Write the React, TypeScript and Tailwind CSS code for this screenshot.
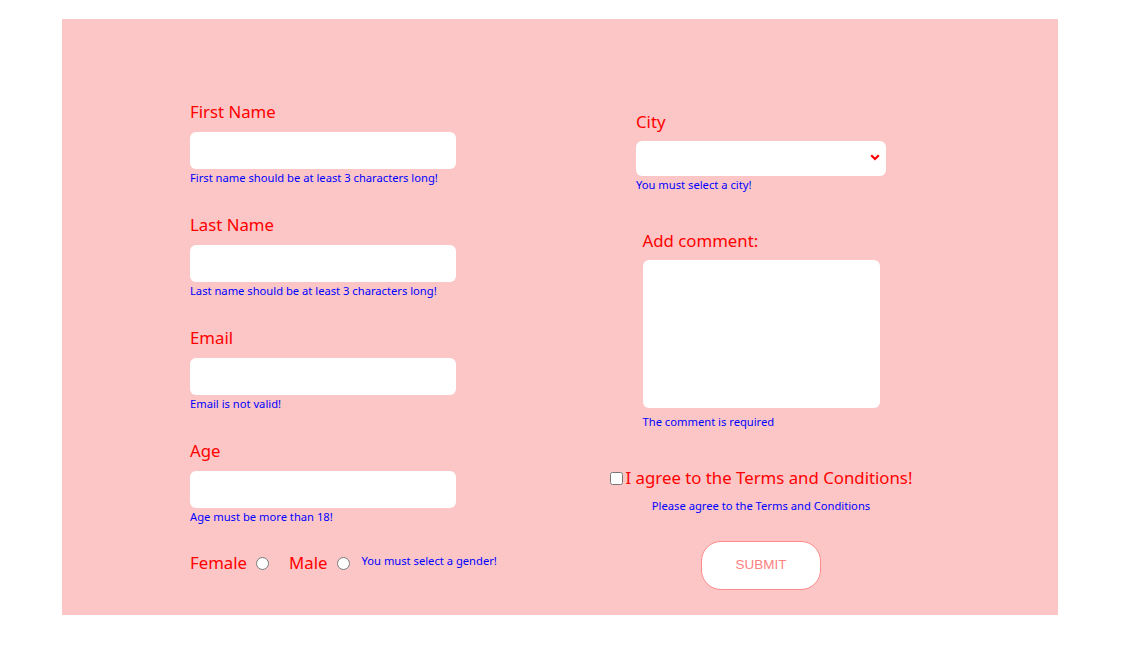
import React from "react";

const label = "block text-[16.8px] leading-[24px] text-[#ff0000]";
const error = "block text-[11.2px] leading-[15px] text-[#0000ff] whitespace-nowrap";
const field = "block w-[266px] h-[37px] rounded-[6px] bg-white border-0 outline-none";

function Field({ name, msg, mb = true }: { name: string; msg: string; mb?: boolean }) {
  return (
    <div className={mb ? "mb-[28px]" : ""}>
      <label className={label}>{name}</label>
      <input type="text" className={`${field} mt-2`} />
      <span className={`${error} mt-px`}>{msg}</span>
    </div>
  );
}

export default function App() {
  return (
    <div className="min-h-[646px] bg-white pt-[19px] pl-[62px]" style={{ fontFamily: '"Noto Sans", sans-serif' }}>
      <form className="w-[996px] h-[596px] bg-[#fcc6c6] flex pl-[128px] pt-[81px]">
        {/* left column */}
        <div className="w-[266px] flex flex-col">
          <Field name="First Name" msg="First name should be at least 3 characters long!" />
          <Field name="Last Name" msg="Last name should be at least 3 characters long!" />
          <Field name="Email" msg="Email is not valid!" />
          <Field name="Age" msg="Age must be more than 18!" mb={false} />

          <div className="flex items-center mt-[27px] h-[24px] whitespace-nowrap">
            <span className="text-[16.8px] leading-[24px] text-[#ff0000]">Female</span>
            <input type="radio" name="gender" className="ml-[9px] w-[13px] h-[13px] m-0" />
            <span className="ml-[20px] text-[16.8px] leading-[24px] text-[#ff0000]">Male</span>
            <input type="radio" name="gender" className="ml-[9px] w-[13px] h-[13px] m-0" />
            <span className="ml-[12px] self-start text-[11.2px] leading-[20px] text-[#0000ff]">You must select a gender!</span>
          </div>
        </div>

        {/* right column */}
        <div className="ml-[145px] w-[320px] flex flex-col items-center pt-[10px]">
          <div className="w-[250px]">
            <label className={label}>City</label>
            <div className="relative mt-[7px]">
              <select className="block w-[250px] h-[35px] rounded-[6px] bg-white appearance-none border-0 outline-none" />
              <svg className="absolute right-[6px] top-[13px] pointer-events-none" width="10" height="7" viewBox="0 0 10 7">
                <path d="M1.2 1.2 5 5 8.8 1.2" fill="none" stroke="#ff0000" strokeWidth="2.2" />
              </svg>
            </div>
            <span className={`${error} mt-px`}>You must select a city!</span>
          </div>

          <div className="w-[237px] mt-[37px]">
            <label className={label}>Add comment:</label>
            <textarea className="block mt-[7px] w-[237px] h-[148px] rounded-[6px] bg-white border-0 outline-none resize-none" />
            <span className={`${error} mt-[6px]`}>The comment is required</span>
          </div>

          <div className="mt-[37px] flex items-center whitespace-nowrap">
            <input type="checkbox" className="w-[13px] h-[13px] m-0 mr-[3px]" />
            <span className="text-[16.8px] leading-[24px] text-[#ff0000]">I agree to the Terms and Conditions!</span>
          </div>
          <span className={`${error} mt-[8px]`}>Please agree to the Terms and Conditions</span>

          <button
            type="button"
            className="mt-[28px] w-[120px] h-[49px] rounded-[20px] bg-white border border-[#ff8a8a] text-[13.5px] text-[#ff8080] uppercase"
            style={{ fontFamily: '"Liberation Sans", Arial, sans-serif' }}
          >
            Submit
          </button>
        </div>
      </form>
    </div>
  );
}
